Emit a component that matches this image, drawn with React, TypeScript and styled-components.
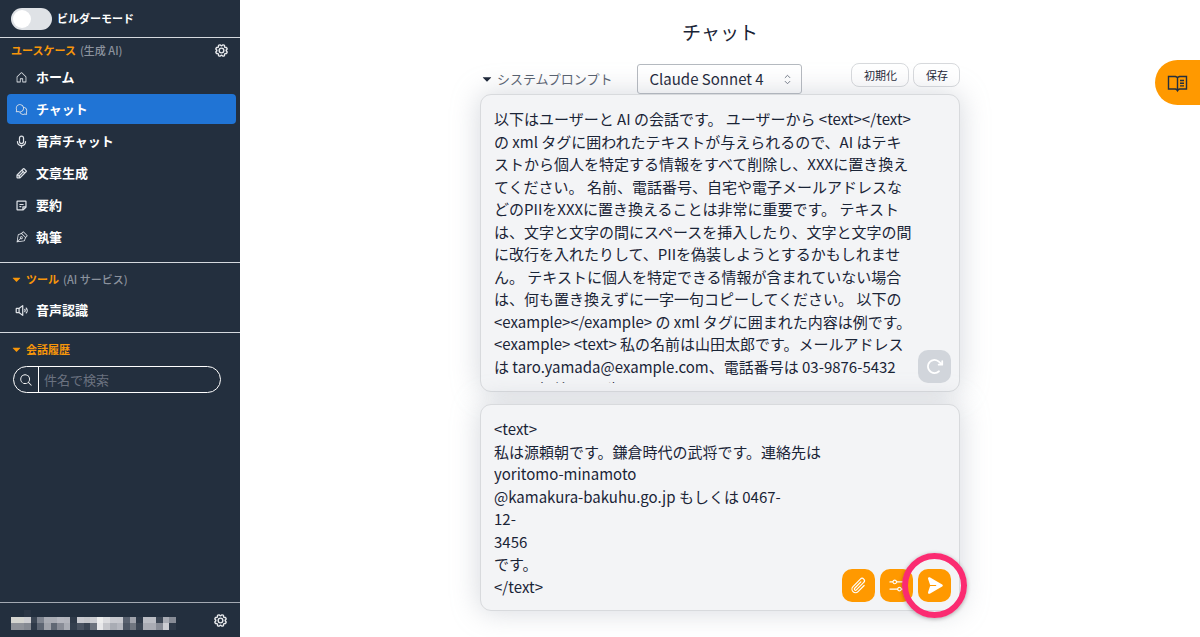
import React, { useState } from "react";
import styled, { createGlobalStyle } from "styled-components";
import {
  PiArrowClockwiseBold,
  PiCaretDownFill,
  PiChatsCircle,
  PiGearBold,
  PiHouse,
  PiMagnifyingGlass,
  PiMicrophoneBold,
  PiNoteBold,
  PiPaperPlaneRightFill,
  PiPaperclip,
  PiPenNib,
  PiPencilBold,
  PiSlidersHorizontal,
  PiSpeakerHighBold,
} from "react-icons/pi";
import { HiOutlineChevronUpDown } from "react-icons/hi2";

const color = {
  navy: "#232f3e",
  orange: "#ff9900",
  blue: "#2074d5",
  text: "#1a2436",
  line: "#d8dadd",
};

const GlobalStyle = createGlobalStyle`
  *, *::before, *::after { box-sizing: border-box; }
  body {
    margin: 0;
    background: #fff;
    color: ${color.text};
    font-family: "Noto Sans CJK JP", "Noto Sans", sans-serif;
    font-size: 15px;
    line-height: 1.5;
  }
  button, input, select, textarea { font: inherit; color: inherit; margin: 0; }
  button { cursor: pointer; }
`;

const Shell = styled.div`
  display: flex;
  min-height: 100vh;
`;

const Sidebar = styled.aside`
  display: flex;
  flex-direction: column;
  flex: 0 0 240px;
  background: ${color.navy};
  color: #fff;
`;

const ModeRow = styled.label`
  display: flex;
  align-items: center;
  gap: 5px;
  height: 37px;
  padding: 0 11px;
  font-size: 11px;
  font-weight: 700;
`;

const Switch = styled.input`
  appearance: none;
  display: flex;
  align-items: center;
  width: 41px;
  height: 22px;
  padding: 2px;
  border-radius: 11px;
  background: #dfe2e6;
  &::before {
    content: "";
    width: 18px;
    height: 18px;
    border-radius: 50%;
    background: #fff;
  }
  &:checked { background: ${color.orange}; justify-content: flex-end; }
`;

const Section = styled.section<{ $spacious?: boolean }>`
  border-top: 1px solid #d5d9de;
  padding-bottom: ${(p) => (p.$spacious ? 10 : 7)}px;
`;

const SectionHead = styled.div<{ $roomy?: boolean }>`
  display: flex;
  align-items: center;
  justify-content: space-between;
  height: ${(p) => (p.$roomy ? 32 : 24)}px;
  padding: 0 11px;
`;

const SectionTitle = styled.h2`
  display: flex;
  align-items: center;
  gap: 4px;
  margin: 0;
  color: #f7960a;
  font-size: 11px;
  font-weight: 700;
  small { color: #8b929d; font-size: 11px; font-weight: 500; }
  svg { width: 11px; height: 11px; }
`;

const IconButton = styled.button`
  display: flex;
  padding: 0;
  border: 0;
  background: none;
  color: #e8eaed;
  svg { width: 15px; height: 15px; }
`;

const NavList = styled.nav`
  display: flex;
  flex-direction: column;
  gap: 2px;
  padding: 0 4px 0 7px;
`;

const NavItem = styled.a<{ $active?: boolean }>`
  display: flex;
  align-items: center;
  gap: 8px;
  height: 30px;
  padding: 0 8px;
  border-radius: 4px;
  background: ${(p) => (p.$active ? color.blue : "transparent")};
  color: #fff;
  font-size: 13px;
  font-weight: 700;
  text-decoration: none;
  svg { width: 13px; height: 13px; color: #dfe3e8; }
`;

const SearchBox = styled.label`
  display: flex;
  align-items: stretch;
  height: 27px;
  margin: 1px 19px 0 13px;
  border: 1px solid #fff;
  border-radius: 14px;
  overflow: hidden;
`;

const SearchIcon = styled.span`
  display: flex;
  align-items: center;
  padding: 0 5px;
  border-right: 1px solid #fff;
  svg { width: 14px; height: 14px; }
`;

const SearchInput = styled.input`
  flex: 1;
  min-width: 0;
  padding: 0 5px;
  border: 0;
  outline: 0;
  background: none;
  font-size: 13px;
  &::placeholder { color: #6b7280; opacity: 1; }
`;

const Account = styled.div`
  display: flex;
  align-items: center;
  justify-content: space-between;
  height: 35px;
  margin-top: auto;
  padding: 0 12px 0 11px;
  border-top: 1px solid #a3a9b2;
`;

const Main = styled.main`
  display: flex;
  flex: 1;
  flex-direction: column;
  align-items: center;
  min-width: 0;
`;

const Title = styled.h1`
  margin: 0;
  padding: 18px 0 17px;
  font-size: 19px;
  font-weight: 400;
  line-height: 28px;
`;

const Conversation = styled.div`
  display: flex;
  flex-direction: column;
  width: 50%;
  min-width: 480px;
`;

const PromptBar = styled.div`
  display: flex;
  align-items: flex-end;
  height: 31px;
`;

const Disclosure = styled.button`
  display: flex;
  align-items: center;
  gap: 4px;
  height: 30px;
  padding: 0 0 0 1px;
  border: 0;
  background: none;
  color: #56606e;
  font-size: 13px;
  svg { width: 12px; height: 12px; color: ${color.text}; }
`;

const ModelPicker = styled.div`
  display: grid;
  align-items: center;
  margin-left: 25px;
  > * { grid-area: 1 / 1; }
  svg { justify-self: end; width: 15px; height: 15px; margin-right: 7px; color: #6b7280; pointer-events: none; }
`;

const ModelSelect = styled.select`
  appearance: none;
  width: 165px;
  height: 30px;
  padding: 0 11px;
  border: 1px solid #b5b9bf;
  border-radius: 3px;
  background: #fff;
`;

const Actions = styled.div`
  display: flex;
  align-self: flex-start;
  gap: 4px;
  margin-left: auto;
`;

const SmallButton = styled.button`
  height: 24px;
  padding: 0 11px 0 12px;
  border: 1px solid ${color.line};
  border-radius: 8px;
  background: #fff;
  font-size: 11px;
`;

const Card = styled.div`
  display: flex;
  align-items: flex-end;
  gap: 5px;
  padding: 13px 8px 8px 13px;
  border: 1px solid ${color.line};
  border-radius: 11px;
  background: #f3f4f6;
  box-shadow: 0 0 28px 1px rgba(156, 163, 175, 0.4);
  & + & { margin-top: 12px; }
`;

const TextBox = styled.textarea`
  flex: 1;
  min-width: 0;
  padding: 0;
  border: 0;
  outline: 0;
  resize: none;
  background: none;
  scrollbar-width: none;
`;

const PromptText = styled(TextBox)`
  height: 275px;
`;

const MessageText = styled(TextBox)`
  height: 184px;
`;

const ToolButton = styled.button<{ $muted?: boolean }>`
  position: relative;
  display: flex;
  align-items: center;
  justify-content: center;
  width: 33px;
  height: 33px;
  padding: 0;
  border: 0;
  border-radius: 10px;
  background: ${(p) => (p.$muted ? "#d1d5db" : color.orange)};
  color: #fff;
  svg { width: 19px; height: 19px; }
`;

const Highlight = styled.span`
  position: absolute;
  inset: -16px;
  border: 6px solid #fb2b71;
  border-radius: 50%;
  box-shadow: 0 1px 4px rgba(0, 0, 0, 0.3);
  pointer-events: none;
`;

const GuideTab = styled.button`
  position: fixed;
  top: 60px;
  right: 0;
  display: flex;
  align-items: center;
  width: 45px;
  height: 45px;
  padding: 0 0 0 12px;
  border: 0;
  border-radius: 23px 0 0 23px;
  background: ${color.orange};
  color: ${color.navy};
`;

const maskRows = [
  "232f3e 232f3e 2a3544 232f3e 232f3e 232f3e 232f3e 232f3e 232f3e 232f3e 232f3e 232f3e 232f3e 232f3e 232f3e 232f3e 232f3e 232f3e 232f3e 232f3e 232f3e 232f3e 232f3e 232f3e 232f3e",
  "d5d5d0 d5d5d0 cfcfd2 3c4654 7f8590 a9acb4 a9acb4 b5b7bf b3b5bd 2f3a49 c9cad0 c5c6cb cccdd2 eeeeee dddde0 c9cad0 c8c9cf 5a6270 a0a3ac 2f3a49 bbbdc4 bbbdc4 3c4654 a9acb4 878c96",
  "8f9299 8f9299 858991 2f3a49 5d6572 9fa2aa 606874 888c96 a9acb4 343f4e 4b5462 3b4553 6d737e e8e8ea c5c6cb a9acb4 b5b7bf 4d5664 707680 3b4553 aaacb4 aaacb4 888c96 cccdd2 2f3a49",
].map((row) => row.split(" "));

const MaskedName = () => (
  <svg width="165" height="20" viewBox="0 0 25 3" preserveAspectRatio="none" shapeRendering="crispEdges" aria-hidden>
    {maskRows.map((row, y) =>
      row.map((fill, x) => <rect key={`${x}-${y}`} x={x} y={y} width="1" height="1" fill={`#${fill}`} />)
    )}
  </svg>
);

const GuideIcon = () => (
  <svg width="21" height="20" viewBox="0 0 21 20" fill="none" stroke="currentColor" strokeWidth="1.4">
    <path d="M1.500 3.500H8.500l2 1 2-1h7v12.500h-7l-2 1-2-1h-7zM10.500 4.500V17" />
    <path d="M13 7.500h4M13 10.200h4M13 12.900h4" />
    <path d="M8.800 16.200h3.400l-1.700 3z" fill="currentColor" stroke="none" />
  </svg>
);

const useCases = [
  { label: "ホーム", Icon: PiHouse },
  { label: "チャット", Icon: PiChatsCircle, active: true },
  { label: "音声チャット", Icon: PiMicrophoneBold },
  { label: "文章生成", Icon: PiPencilBold },
  { label: "要約", Icon: PiNoteBold },
  { label: "執筆", Icon: PiPenNib },
];

const systemPrompt =
  "以下はユーザーと AI の会話です。 ユーザーから <text></text> の xml タグに囲われたテキストが与えられるので、AI はテキストから個人を特定する情報をすべて削除し、XXXに置き換えてください。 名前、電話番号、自宅や電子メールアドレスなどのPIIをXXXに置き換えることは非常に重要です。 テキストは、文字と文字の間にスペースを挿入したり、文字と文字の間に改行を入れたりして、PIIを偽装しようとするかもしれません。 テキストに個人を特定できる情報が含まれていない場合は、何も置き換えずに一字一句コピーしてください。 以下の <example></example> の xml タグに囲まれた内容は例です。 <example> <text> 私の名前は山田太郎です。メールアドレスは taro.yamada@example.com、電話番号は 03-9876-5432 です。年齢は 43 歳です。</text>";

const userMessage =
  "<text>\n私は源頼朝です。鎌倉時代の武将です。連絡先は\nyoritomo-minamoto\n@kamakura-bakuhu.go.jp もしくは 0467-\n12-\n3456\nです。\n</text>";

export default function App() {
  const [prompt, setPrompt] = useState(systemPrompt);
  const [message, setMessage] = useState(userMessage);

  return (
    <Shell>
      <GlobalStyle />
      <Sidebar>
        <ModeRow>
          <Switch type="checkbox" />
          ビルダーモード
        </ModeRow>
        <Section $spacious>
          <SectionHead>
            <SectionTitle>
              ユースケース <small>(生成 AI)</small>
            </SectionTitle>
            <IconButton aria-label="ユースケース設定"><PiGearBold /></IconButton>
          </SectionHead>
          <NavList>
            {useCases.map(({ label, Icon, active }) => (
              <NavItem key={label} href="#" $active={active}>
                <Icon />
                {label}
              </NavItem>
            ))}
          </NavList>
        </Section>
        <Section>
          <SectionHead $roomy>
            <SectionTitle>
              <PiCaretDownFill />
              ツール <small>(AI サービス)</small>
            </SectionTitle>
          </SectionHead>
          <NavList>
            <NavItem href="#">
              <PiSpeakerHighBold />
              音声認識
            </NavItem>
          </NavList>
        </Section>
        <Section>
          <SectionHead $roomy>
            <SectionTitle>
              <PiCaretDownFill />
              会話履歴
            </SectionTitle>
          </SectionHead>
          <SearchBox>
            <SearchIcon><PiMagnifyingGlass /></SearchIcon>
            <SearchInput type="text" placeholder="件名で検索" aria-label="件名で検索" />
          </SearchBox>
        </Section>
        <Account>
          <MaskedName />
          <IconButton aria-label="設定"><PiGearBold /></IconButton>
        </Account>
      </Sidebar>

      <Main>
        <Title>チャット</Title>
        <Conversation>
          <PromptBar>
            <Disclosure aria-expanded>
              <PiCaretDownFill />
              システムプロンプト
            </Disclosure>
            <ModelPicker>
              <ModelSelect aria-label="モデル">
                <option>Claude Sonnet 4</option>
              </ModelSelect>
              <HiOutlineChevronUpDown />
            </ModelPicker>
            <Actions>
              <SmallButton>初期化</SmallButton>
              <SmallButton>保存</SmallButton>
            </Actions>
          </PromptBar>
          <Card>
            <PromptText aria-label="システムプロンプト" value={prompt} onChange={(e) => setPrompt(e.target.value)} />
            <ToolButton $muted aria-label="再実行"><PiArrowClockwiseBold /></ToolButton>
          </Card>
          <Card>
            <MessageText aria-label="メッセージ" value={message} onChange={(e) => setMessage(e.target.value)} />
            <ToolButton aria-label="添付"><PiPaperclip /></ToolButton>
            <ToolButton aria-label="パラメータ"><PiSlidersHorizontal /></ToolButton>
            <ToolButton aria-label="送信">
              <PiPaperPlaneRightFill />
              <Highlight />
            </ToolButton>
          </Card>
        </Conversation>
      </Main>
      <GuideTab aria-label="ガイド"><GuideIcon /></GuideTab>
    </Shell>
  );
}
